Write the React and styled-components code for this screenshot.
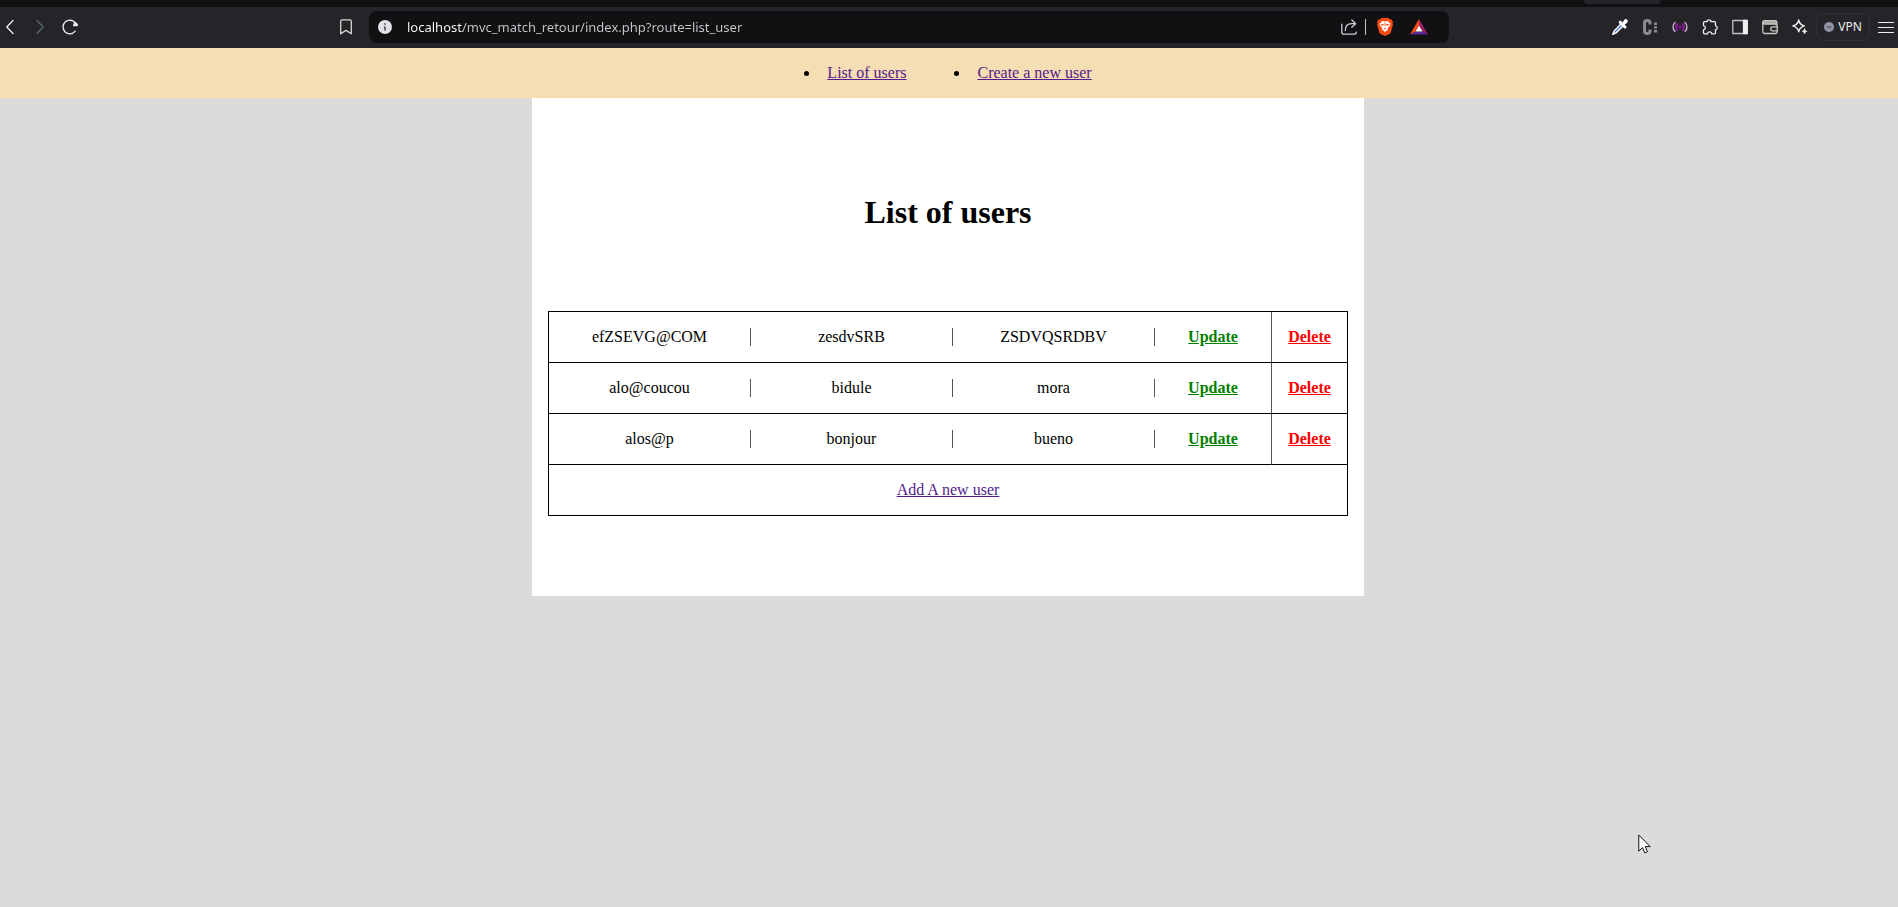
import React from "react";
import styled, { createGlobalStyle } from "styled-components";

const GlobalStyle = createGlobalStyle`
  *, *::before, *::after { box-sizing: border-box; }
  html, body, #root { height: 100%; }
  body {
    margin: 0;
    background: #dbdbdb;
    color: #000;
    font: 16px/18px "Liberation Serif", "Times New Roman", serif;
  }
`;

/* ---------- browser chrome ---------- */

const Browser = styled.header`
  background: #252529;
  font-family: "Noto Sans", "Segoe UI", sans-serif;
`;

const TabStrip = styled.div`
  display: flex;
  justify-content: flex-end;
  height: 7px;
  padding-right: 237px;
  background: #111113;
`;

const TabEdge = styled.div`
  width: 77px;
  height: 4px;
  background: #252529;
  border-radius: 0 0 6px 6px;
`;

const Toolbar = styled.div`
  display: grid;
  grid-template-columns: minmax(130px, 369fr) minmax(240px, 1080fr) minmax(300px, 449fr);
  align-items: center;
  height: 41px;
  padding-bottom: 1px;
`;

const Group = styled.div`
  display: flex;
  align-items: center;
  gap: 14px;
`;

const StartArea = styled.div`
  display: flex;
  justify-content: space-between;
  padding: 0 15px 0 2px;
`;

const Extensions = styled(Group)`
  justify-content: flex-end;
  padding-right: 4px;
`;

const IconButton = styled.button`
  display: flex;
  align-items: center;
  justify-content: center;
  flex: none;
  width: 16px;
  height: 32px;
  padding: 0;
  border: 0;
  background: none;
  color: ${(p) => p.$tone || "#eeeeee"};

  svg { flex: none; overflow: visible; }
`;

const AddressBar = styled.form`
  display: flex;
  align-items: center;
  height: 32px;
  padding: 0 22px 0 8px;
  background: #111113;
  border-radius: 8px;
`;

const AddressInput = styled.input`
  flex: 1;
  min-width: 0;
  margin: 0 0 0 14px;
  padding: 0;
  border: 0;
  outline: 0;
  font: 13px/20px "Noto Sans", "Segoe UI", sans-serif;
  color: #c8c8cc;
  background: linear-gradient(to right, #ffffff 56px, #c8c8cc 56px);
  background-clip: text;
  -webkit-text-fill-color: transparent;
`;

const Separator = styled.span`
  width: 1px;
  height: 16px;
  margin: 0 11px 0 8px;
  background: #c9c5b0;
`;

const Rewards = styled(Group)`
  gap: 18px;
`;

const VpnButton = styled.button`
  display: flex;
  align-items: center;
  justify-content: center;
  gap: 4px;
  width: 54px;
  height: 28px;
  margin: 0 -6px 0 -6px;
  padding: 0;
  border: 1px solid #313136;
  border-radius: 8px;
  background: none;
  color: #eeeeee;
  font: 12px/16px "Noto Sans", "Segoe UI", sans-serif;
`;

const Icon = ({ w = 16, h = 16, children, ...rest }) => (
  <svg
    width={w}
    height={h}
    viewBox={`0 0 ${w} ${h}`}
    fill="none"
    stroke="currentColor"
    strokeWidth="1.3"
    strokeLinecap="round"
    strokeLinejoin="round"
    aria-hidden="true"
    {...rest}
  >
    {children}
  </svg>
);

const BackIcon = () => <Icon><path d="M11 1.5 4.8 8l6.2 6.5" /></Icon>;
const ForwardIcon = () => <Icon><path d="M5 1.5 11.2 8 5 14.5" /></Icon>;
const ReloadIcon = () => (
  <Icon>
    <path d="M13.2 12.2A6.8 6.8 0 1 1 13.4 4.1" />
    <path d="M11.6 6.6h3.2c.6 0 .9-.7.5-1.1L13.6 3.6c-.3-.4-1-.2-1 .3z" fill="currentColor" />
  </Icon>
);
const BookmarkIcon = () => (
  <Icon><path d="M2.7 2.2c0-.8.6-1.4 1.4-1.4h7.8c.8 0 1.4.6 1.4 1.4v12.6L8 11.4l-5.3 3.4z" /></Icon>
);
const InfoIcon = () => (
  <Icon>
    <circle cx="8" cy="8" r="7" fill="#e2e2e6" stroke="none" />
    <path d="M8 4.3v1.4M8 8v3.6M6.9 7.8H8" stroke="#5a5a60" strokeWidth="1.8" strokeLinecap="butt" />
  </Icon>
);
const ShareIcon = () => (
  <Icon>
    <path d="M.8 5.2v8c0 1.2.8 2 2 2h10.4c1.2 0 2-.8 2-2" />
    <path d="M4.3 11.5c0-4.4 2.6-6.8 6.2-6.8h3.8M10.8 1l3.9 3.7-3.9 3.6" />
  </Icon>
);
const BraveIcon = () => (
  <Icon w={16} h={18} stroke="none">
    <path d="M4.4 0h7.2l1.5 1.6 1.5-.1L16 3.9l-.5 1.5.4 1.3-2.2 7.8c-.2.7-.6 1.2-1.2 1.6L8 18l-4.5-1.9c-.6-.4-1-.9-1.2-1.6L.1 6.7l.4-1.3L0 3.900l1.400-2.400 1.500.1z" fill="#fb4a12" />
    <path d="M5.4 3 8 3.5 10.600 3l2.900 2.700-.6 2.100-2.300 2.400.4 1.300-3 2.600-3-2.600.4-1.300L3.100 7.800l-.6-2.100z" fill="#fff" />
    <path d="M3.6 6.3 6.7 6l-.2 1.4-1.800.3zM12.400 6.300 9.300 6l.2 1.400 1.800.3zM6.900 9.800 8 10.300l1.100-.5-.5 1.500h-1.200zM7.500 4.800h1v3h-1z" fill="#fb4a12" />
  </Icon>
);
const TriangleIcon = () => (
  <Icon w={18} h={16} stroke="none">
    <path d="M9 0 0 15.500 5.500 12.500 9 6.500z" fill="#ff4a12" />
    <path d="M9 0 18 15.500 12.500 12.500 9 6.500z" fill="#9e1f63" />
    <path d="M0 15.500h18l-5.500-3h-7z" fill="#5a2d9c" />
    <path d="M9 6.500 12.500 12.500h-7z" fill="#fff" />
  </Icon>
);
const DropperIcon = () => (
  <Icon>
    <path d="m9.200 4.800-7 7.200-1.400 3.200 3.200-1.300 7.100-7.200" fill="#2c63c4" stroke="#fff" strokeWidth="1.5" />
    <path d="m8.200 3.200 4.800 4.800M10.700 5.500 13.500 2.700" strokeWidth="3" stroke="#fff" />
    <path d="m13.200 2.800.6-.6" strokeWidth="4" stroke="#fff" />
  </Icon>
);
const CIcon = () => (
  <Icon stroke="#8b8b8f" strokeLinecap="butt">
    <path d="M8 5.500V4c0-1.600-1-2.500-2.600-2.500S2.500 2.400 2.500 4v8c0 1.600 1.200 2.500 2.900 2.500S8 13.600 8 12v-1.500" strokeWidth="3" />
    <path d="M13.500 3.500v2.600M13.500 7.200v2.400M13.500 10.700v2.800" strokeWidth="3" />
  </Icon>
);
const SignalIcon = () => (
  <Icon>
    <path d="M3 3.500C.4 6 .4 10 3 12.500M13 3.500c2.600 2.500 2.600 6.500 0 9" stroke="#c9a9c9" strokeWidth="1.5" />
    <path d="M5.400 5c-1.500 1.700-1.500 4.300 0 6M10.600 5c1.500 1.700 1.500 4.300 0 6" stroke="#8d1b9c" strokeWidth="2" />
    <circle cx="8" cy="8" r="1.5" fill="#8d1b9c" stroke="none" />
  </Icon>
);
const PuzzleIcon = () => (
  <Icon>
    <path d="M2.500 2.700h2.600c0-2.400 3.900-2.400 3.900 0h3.500c.6 0 1 .4 1 1v3c2.300.6 2.300 3.600 0 4.200v2.900c0 .6-.4 1-1 1H9.800c-.4-2.500-4-2.500-4.400 0H2.500c-.6 0-1-.4-1-1v-2.900c2.500-.6 2.500-3.600 0-4.200v-3c0-.6.4-1 1-1z" />
  </Icon>
);
const PanelIcon = () => (
  <Icon>
    <rect x=".8" y="1.500" width="14.400" height="13" stroke="#c0c0c0" />
    <path d="M11.500 1.500h3.700v13h-3.700z" fill="currentColor" />
  </Icon>
);
const WalletIcon = () => (
  <Icon stroke="#c8c8c4">
    <path d="M.8 3.500c0-1 .7-1.800 1.700-1.800h10.700c.9 0 1.600.7 1.600 1.600v1.800H2.400C1.500 5.100.8 4.400.8 3.500z" fill="#a8a8a6" />
    <path d="M.8 3.500v9.200c0 1.100.7 1.800 1.800 1.800h10.800c1.100 0 1.800-.7 1.800-1.800V6.800c0-1-.7-1.700-1.800-1.700" />
    <path d="M15.200 7.800h-4.500a2 2 0 0 0 0 4h4.500" />
  </Icon>
);
const SparkleIcon = () => (
  <Icon>
    <path d="M6.700 1c.7 3.500 2.200 5 5.700 5.900-3.500.9-5 2.400-5.700 5.900-.7-3.500-2.200-5-5.900-5.900C4.500 6 6 4.500 6.700 1z" />
    <path d="M12.600 9.800c.3 1.500 1 2.200 2.500 2.500-1.500.4-2.200 1.100-2.500 2.600-.4-1.500-1.100-2.200-2.600-2.600 1.500-.3 2.200-1 2.600-2.500z" fill="currentColor" strokeWidth=".6" />
  </Icon>
);
const VpnIcon = () => (
  <Icon w={10} h={10}>
    <circle cx="5" cy="5" r="5" fill="#9494a8" stroke="none" />
    <path d="M2.500 5h5" stroke="#5c5c6a" strokeWidth="1.500" strokeLinecap="butt" />
  </Icon>
);
const MenuIcon = () => (
  <Icon strokeLinecap="butt" strokeWidth="1"><path d="M0 3.500h16M0 8.500h16M0 13.500h16" /></Icon>
);

const EXTENSIONS = [
  ["Colour picker", DropperIcon],
  ["Cookies", CIcon],
  ["Signal", SignalIcon],
  ["Extensions", PuzzleIcon],
  ["Side panel", PanelIcon],
  ["Wallet", WalletIcon],
  ["Assistant", SparkleIcon],
];

/* ---------- page ---------- */

const MainNav = styled.nav`
  background: #f5deb3;
`;

const NavList = styled.ul`
  display: flex;
  justify-content: center;
  gap: 48px;
  margin: 0;
  padding: 16px 18px 16px 16px;
  list-style: none;
`;

const NavItem = styled.li`
  display: flex;
  align-items: center;
  gap: 18px;

  &::before {
    content: "";
    width: 5px;
    height: 5px;
    border-radius: 50%;
    background: #000;
  }
`;

const Link = styled.a`
  color: ${(p) => p.$color || "#551a8b"};
  font-weight: ${(p) => (p.$bold ? "bold" : "normal")};
`;

const Page = styled.div`
  padding-right: 2px;
`;

const Content = styled.main`
  max-width: 832px;
  margin: 0 auto;
  padding: 96px 16px 80px;
  background: #fff;
`;

const Title = styled.h1`
  margin: 0 0 80px;
  font-size: 32px;
  line-height: 37px;
  text-align: center;
`;

const UserTable = styled.table`
  width: 100%;
  table-layout: fixed;
  border: 1px solid #000;
  border-bottom: 0;
  border-collapse: separate;
  border-spacing: 0;
  text-align: center;
`;

const UpdateCol = styled.col`
  width: 117px;
`;

const DeleteCol = styled.col`
  width: 75px;
`;

const Cell = styled.td`
  padding: 16px 0;
  border-bottom: 1px solid #000;
`;

const UpdateCell = styled(Cell)`
  border-right: 1px solid #555;
`;

const Field = styled.div`
  border-right: 1px solid #555;
`;

const Pointer = styled.svg`
  position: absolute;
  left: 1638px;
  top: 834px;
  pointer-events: none;
`;

const USERS = [
  ["efZSEVG@COM", "zesdvSRB", "ZSDVQSRDBV"],
  ["alo@coucou", "bidule", "mora"],
  ["alos@p", "bonjour", "bueno"],
];

export default function App() {
  return (
    <>
      <GlobalStyle />
      <Browser>
        <TabStrip><TabEdge /></TabStrip>
        <Toolbar>
          <StartArea>
            <Group>
              <IconButton aria-label="Back"><BackIcon /></IconButton>
              <IconButton aria-label="Forward" $tone="#5a6670"><ForwardIcon /></IconButton>
              <IconButton aria-label="Reload"><ReloadIcon /></IconButton>
            </Group>
            <IconButton aria-label="Bookmark" $tone="#d8d8d4"><BookmarkIcon /></IconButton>
          </StartArea>
          <AddressBar onSubmit={(e) => e.preventDefault()}>
            <IconButton type="button" aria-label="Site information"><InfoIcon /></IconButton>
            <AddressInput
              aria-label="Address"
              defaultValue="localhost/mvc_match_retour/index.php?route=list_user"
            />
            <IconButton type="button" aria-label="Share" $tone="#c4ccd0"><ShareIcon /></IconButton>
            <Separator />
            <Rewards>
              <IconButton type="button" aria-label="Shields"><BraveIcon /></IconButton>
              <IconButton type="button" aria-label="Rewards"><TriangleIcon /></IconButton>
            </Rewards>
          </AddressBar>
          <Extensions>
            {EXTENSIONS.map(([name, Glyph]) => (
              <IconButton key={name} aria-label={name}><Glyph /></IconButton>
            ))}
            <VpnButton><VpnIcon />VPN</VpnButton>
            <IconButton aria-label="Menu"><MenuIcon /></IconButton>
          </Extensions>
        </Toolbar>
      </Browser>

      <MainNav>
        <NavList>
          <NavItem><Link href="#list">List of users</Link></NavItem>
          <NavItem><Link href="#create">Create a new user</Link></NavItem>
        </NavList>
      </MainNav>

      <Page>
        <Content>
          <Title>List of users</Title>
          <UserTable>
            <colgroup>
              <col /><col /><col />
              <UpdateCol />
              <DeleteCol />
            </colgroup>
            <tbody>
              {USERS.map((user) => (
                <tr key={user[0]}>
                  {user.map((value) => (
                    <Cell key={value}><Field>{value}</Field></Cell>
                  ))}
                  <UpdateCell><Link href="#update" $color="green" $bold>Update</Link></UpdateCell>
                  <Cell><Link href="#delete" $color="red" $bold>Delete</Link></Cell>
                </tr>
              ))}
              <tr>
                <Cell colSpan={5}><Link href="#create">Add A new user</Link></Cell>
              </tr>
            </tbody>
          </UserTable>
        </Content>
      </Page>

      <Pointer width="13" height="20" viewBox="0 0 13 20" aria-hidden="true">
        <path
          d="M.8 1v16.200l3.700-3.500 2.300 5.200 2.700-1.200-2.300-5.100h5z"
          fill="#fff"
          stroke="#111"
          strokeWidth="1"
        />
      </Pointer>
    </>
  );
}
